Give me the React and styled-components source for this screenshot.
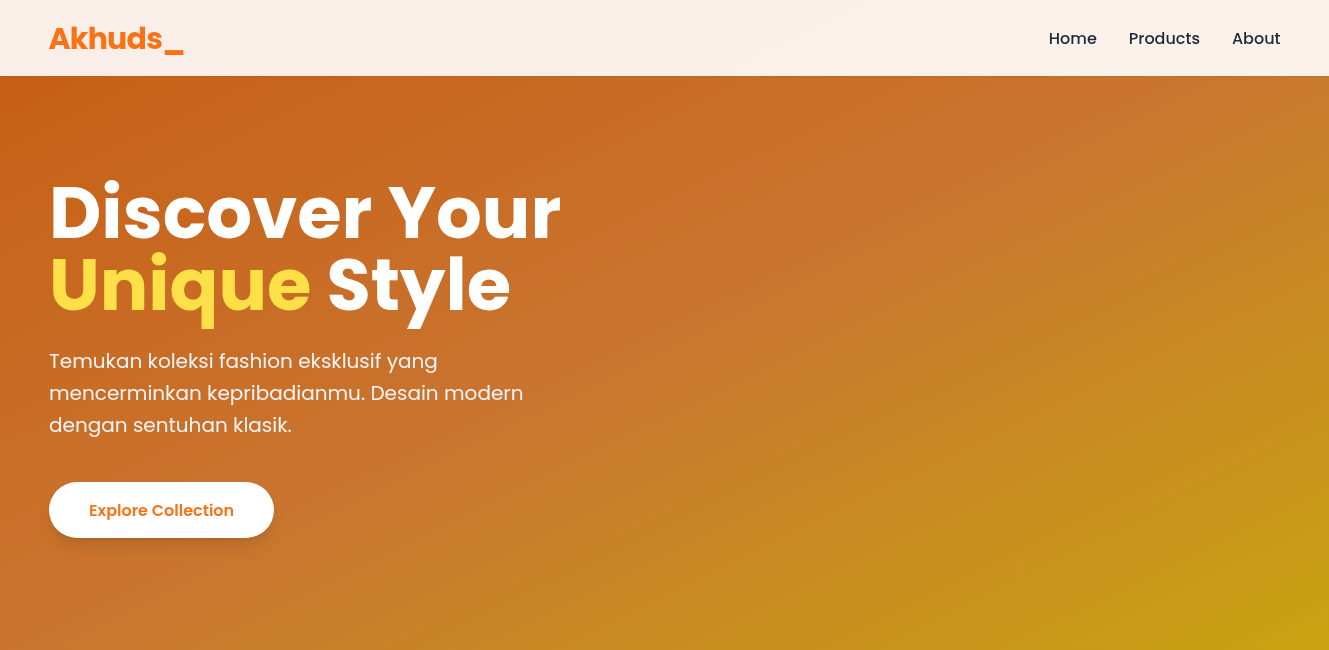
import React from "react";
import styled, { createGlobalStyle } from "styled-components";

const GlobalStyle = createGlobalStyle`
  *, *::before, *::after { box-sizing: border-box; }
  body {
    margin: 0;
    font-family: Poppins, Inter, "Liberation Sans", sans-serif;
    font-size: 16px;
    line-height: 24px;
    color: #1f2937;
    -webkit-font-smoothing: antialiased;
  }
  h1, p { margin: 0; }
`;

const Container = styled.div`
  width: 100%;
  max-width: 1280px;
  margin: 0 auto;
  padding: 0 24px;
`;

const Header = styled.header`
  position: fixed;
  inset: 0 0 auto;
  z-index: 10;
  padding: 17px 0 15px;
  background: rgba(255, 255, 255, 0.9);
  box-shadow: 0 1px 2px rgba(0, 0, 0, 0.05);
`;

const Bar = styled(Container)`
  display: flex;
  align-items: center;
  justify-content: space-between;
`;

const Logo = styled.a`
  font-size: 30px;
  line-height: 44px;
  font-weight: 700;
  letter-spacing: -0.025em;
  color: #f97316;
  text-decoration: none;
`;

const Nav = styled.nav`
  display: flex;
  gap: 32px;
`;

const NavLink = styled.a`
  font-weight: 500;
  color: #1f2937;
  text-decoration: none;
`;

const Hero = styled.section`
  display: flex;
  align-items: center;
  min-height: 100vh;
  padding-top: 65px;
  background:
    linear-gradient(rgba(0, 0, 0, 0.2), rgba(0, 0, 0, 0.2)),
    linear-gradient(to bottom right, #f97316, #fb923c, #facc15);
`;

const Copy = styled.div`
  display: flex;
  flex-direction: column;
  align-items: flex-start;
  max-width: 576px;
  will-change: transform;
`;

const Title = styled.h1`
  margin-bottom: 24px;
  font-size: 72px;
  line-height: 72px;
  font-weight: 700;
  color: #fff;
`;

const Accent = styled.span`
  color: #fde047;
`;

const Lead = styled.p`
  max-width: 512px;
  margin-bottom: 41px;
  font-size: 20px;
  line-height: 32px;
  color: #f3f4f6;
`;

const Button = styled.button`
  padding: 17px 40px 15px;
  border: 0;
  border-radius: 28px;
  background: #fff;
  color: #f97316;
  font: inherit;
  font-weight: 600;
  box-shadow: 0 10px 15px -3px rgba(0, 0, 0, 0.1), 0 4px 6px -4px rgba(0, 0, 0, 0.1);
  cursor: pointer;
`;

const links = ["Home", "Products", "About"];

export default function App() {
  return (
    <>
      <GlobalStyle />
      <Header>
        <Bar>
          <Logo href="#home">Akhuds_</Logo>
          <Nav>
            {links.map((label) => (
              <NavLink key={label} href={`#${label.toLowerCase()}`}>{label}</NavLink>
            ))}
          </Nav>
        </Bar>
      </Header>
      <main>
        <Hero id="home">
          <Container>
            <Copy>
              <Title>
                Discover Your
                <br />
                <Accent>Unique</Accent> Style
              </Title>
              <Lead>
                Temukan koleksi fashion eksklusif yang mencerminkan
                kepribadianmu. Desain modern dengan sentuhan klasik.
              </Lead>
              <Button type="button">Explore Collection</Button>
            </Copy>
          </Container>
        </Hero>
      </main>
    </>
  );
}
